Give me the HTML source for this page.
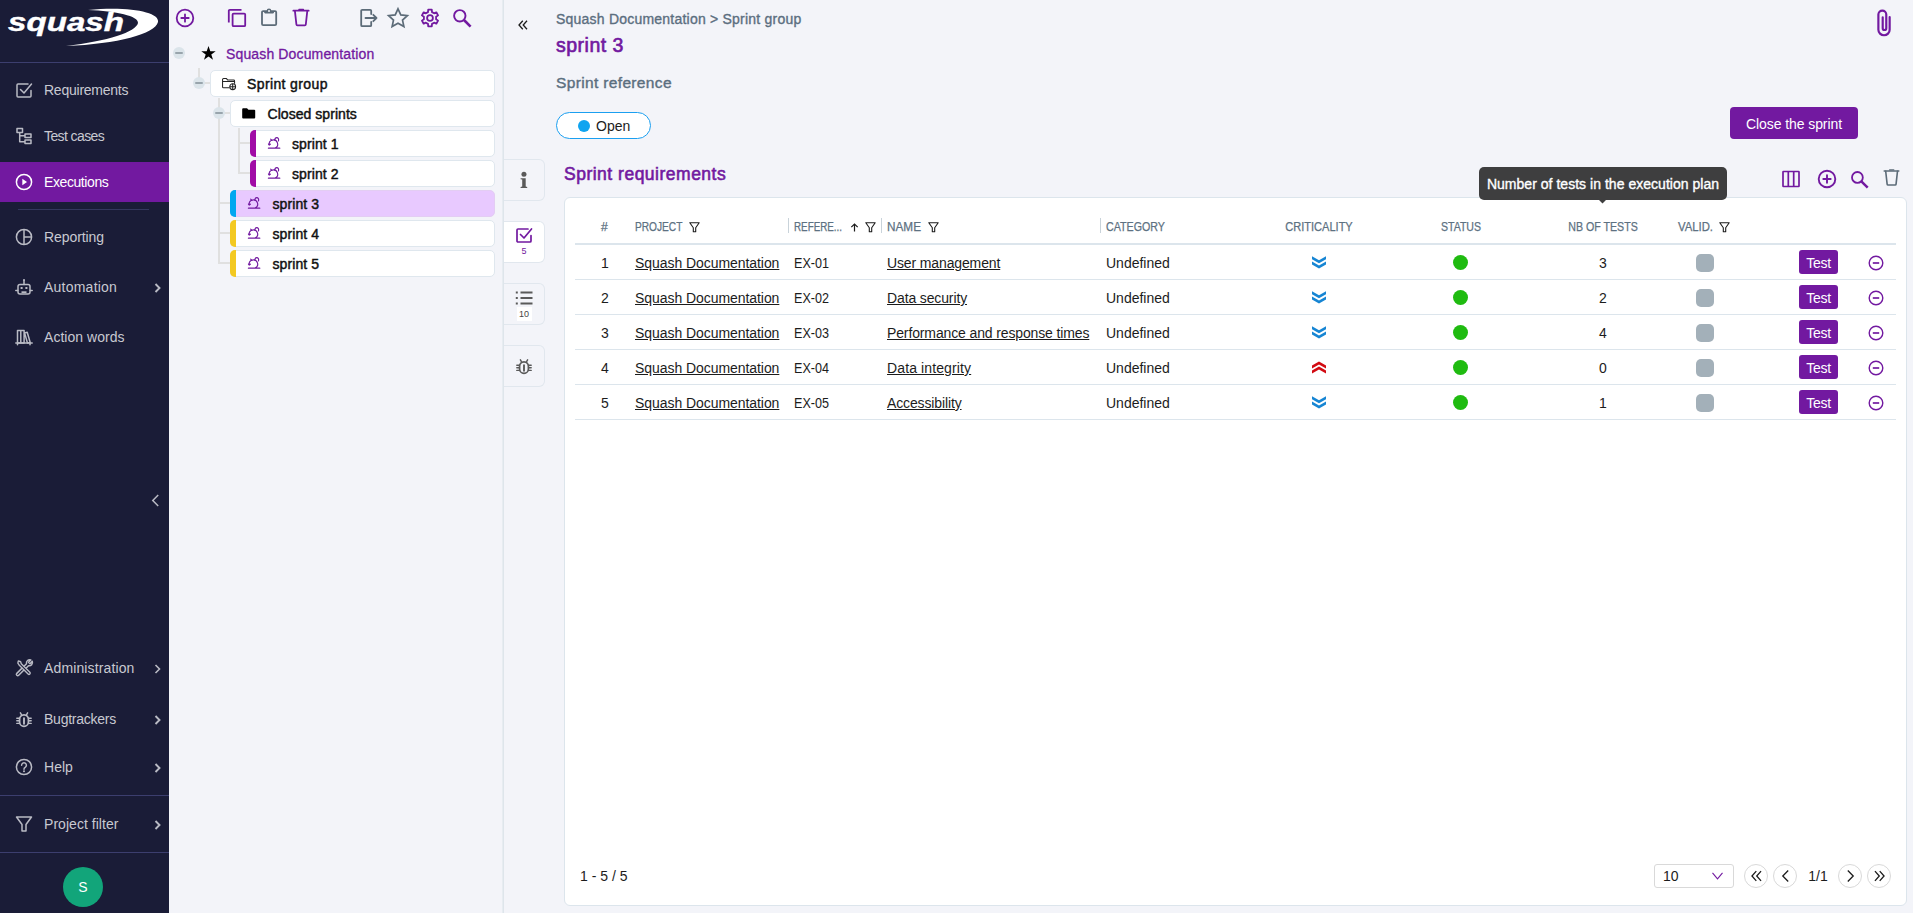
<!DOCTYPE html>
<html lang="en">
<head>
<meta charset="utf-8">
<title>Squash - sprint 3</title>
<style>
*{box-sizing:border-box;margin:0;padding:0}
html,body{width:1913px;height:913px;overflow:hidden}
body{font-family:"Liberation Sans",Arial,sans-serif;font-size:14px;color:#1c1c1c;background:#f3f4f9;position:relative}
.abs{position:absolute}
svg{display:block;overflow:visible}
/* NAV */
#nav{position:absolute;left:0;top:0;width:169px;height:913px;background:#1a1c37}
#nav .hr{position:absolute;left:0;width:169px;height:1px;background:#3c3e6e}
#nav .item{position:absolute;left:0;width:169px;height:40px;color:#c8c9d1}
#nav .item.active{background:#7219a0;color:#fff}
#nav .item .ic{position:absolute;left:15px;top:11px;width:18px;height:18px}
#nav .item .lb{position:absolute;left:44px;top:0;line-height:40px;font-size:14px;white-space:nowrap;letter-spacing:-0.15px}
#nav .item .ch{position:absolute;left:154px;top:15.500px;width:8px;height:10px}
/* TREE */
#tree{position:absolute;left:169px;top:0;width:334px;height:913px;background:#f3f4f9;border-right:1px solid #e7ecf1}
.tb{position:absolute;top:8px;width:20px;height:20px}
.node{position:absolute;height:27px;background:#fff;border:1px solid #dfe7ee;border-radius:5px;right:7px}
.node .t,.proj .t{position:absolute;top:0;line-height:26.500px;font-size:14px;white-space:nowrap;color:#111;-webkit-text-stroke:0.45px #111;letter-spacing:0.3px}
.node .bar{position:absolute;left:-1px;top:-1px;bottom:-1px;width:6px;border-radius:5px 0 0 5px}
.tg{position:absolute;width:12px;height:12px;border-radius:50%;background:#dbe4ea}
.tg:after{content:"";position:absolute;left:2px;top:5px;width:8px;height:2px;background:#98a4ac;border-radius:1px}
.ln{position:absolute;background:#e0e0e0}
/* MAIN */
#main{position:absolute;left:503px;top:0;width:1410px;height:913px;background:#f3f4f9;border-left:1px solid #dee5eb}
.sb{-webkit-text-stroke:0.35px currentColor}
.tab{position:absolute;left:0;width:41px;height:42px;border:1px solid #e1e7ee;border-left:none;border-radius:0 6px 6px 0;background:#f3f4f9}
.tab.sel{background:#fff}
#card{position:absolute;left:60px;top:197px;width:1343px;height:709px;background:#fff;border:1px solid #dce5ec;border-radius:6px}
.th{position:absolute;top:20.500px;font-size:12px;line-height:16px;color:#5d7182;white-space:nowrap;-webkit-text-stroke:0.25px #5d7182}
.vs{position:absolute;top:20px;width:1px;height:15px;background:#c9d3da}
.row{position:absolute;left:10px;width:1321px;height:35px;border-bottom:1px solid #dce5ec}
.row span,.row a{position:absolute;top:0;line-height:36px;font-size:14px;white-space:nowrap;color:#1c1c1c}
.row .ref{transform:scaleX(0.9);transform-origin:left}
.row a{text-decoration:underline;text-underline-offset:1px;letter-spacing:-0.13px}
.dot{position:absolute;left:878px;top:9.5px;width:15px;height:15px;border-radius:50%;background:#1fbb10}
.sq{position:absolute;left:1121px;top:9px;width:18px;height:18px;border-radius:5px;background:#a3b0b9}
.row .btnt{position:absolute;left:1224px;top:5px;width:39px;height:24px;border-radius:3px;background:#7219a0;color:#fff !important;text-align:center;line-height:26px !important;font-size:14px;letter-spacing:-0.3px}
.crit{position:absolute;left:737px;top:10.500px;width:14px;height:13px}
.rm{position:absolute;left:1293px;top:10px;width:16px;height:16px}
.pg{position:absolute;top:666px;width:24px;height:24px;border:1px solid #d9d9d9;border-radius:50%;background:#fff}
</style>
</head>
<body>
<div id="nav">
 <svg class="abs" style="left:0;top:0" width="169" height="62" viewBox="0 0 169 62">
  <path d="M88 10 C128 6 160 12 158 22 C155 34 118 44 66 46 C108 41 136 32 138 23 C139 16 116 11 88 10 Z" fill="#fff"/>
  <text x="8" y="31" font-family="Liberation Sans, Arial, sans-serif" font-weight="700" font-style="italic" font-size="25" fill="#fff" stroke="#fff" stroke-width="0.400" textLength="116" lengthAdjust="spacingAndGlyphs">squash</text>
 </svg>
 <div class="hr" style="top:62px;height:1px;background:#3c3e6e"></div>

 <div class="item" style="top:70px">
  <svg class="ic" viewBox="0 0 18 18" fill="none" stroke="#b9bac4" stroke-width="1.5" stroke-linecap="round" stroke-linejoin="round"><path d="M16 9.5V15a1 1 0 0 1-1 1H3a1 1 0 0 1-1-1V4a1 1 0 0 1 1-1h10"/><path d="M5.5 8.5l3.5 3.5 7.5-9"/></svg>
  <span class="lb" style="letter-spacing:-0.24px">Requirements</span></div>
 <div class="item" style="top:116px">
  <svg class="ic" viewBox="0 0 18 18" fill="none" stroke="#b9bac4" stroke-width="1.5" stroke-linejoin="round"><rect x="2" y="1.500" width="5.500" height="4"/><rect x="10" y="7" width="6" height="3.400"/><rect x="10" y="13" width="6" height="3.400"/><path d="M4.700 5.500v9.200H10M4.700 8.700H10"/></svg>
  <span class="lb" style="letter-spacing:-0.6px">Test cases</span></div>
 <div class="item active" style="top:162px">
  <svg class="ic" viewBox="0 0 18 18" fill="none" stroke="#fff" stroke-width="1.5"><circle cx="9" cy="9" r="7.6"/><path d="M7.3 5.8v6.4L12 9z" fill="#fff" stroke="none"/></svg>
  <span class="lb" style="letter-spacing:-0.41px">Executions</span></div>
 <div class="abs" style="left:18px;top:209px;width:131px;height:1px;background:#34375f"></div>
 <div class="item" style="top:217px">
  <svg class="ic" viewBox="0 0 18 18" fill="none" stroke="#b9bac4" stroke-width="1.5"><circle cx="9" cy="9" r="7.6"/><path d="M9 1.4v15.2M9 9h7.6"/></svg>
  <span class="lb" style="letter-spacing:-0.08px">Reporting</span></div>
 <div class="item" style="top:267px">
  <svg class="ic" viewBox="0 0 18 18" fill="none" stroke="#b9bac4" stroke-width="1.5" stroke-linejoin="round"><rect x="3" y="6.5" width="12" height="9.5" rx="2"/><path d="M9 6.5V2.5M0.8 12.5h2M15.2 12.5h2" stroke-linecap="round"/><circle cx="9" cy="2" r="1" fill="#b9bac4" stroke="none"/><rect x="5.6" y="9" width="2" height="2" fill="#b9bac4" stroke="none"/><rect x="10.4" y="9" width="2" height="2" fill="#b9bac4" stroke="none"/><path d="M6.5 14.2h5" stroke-width="1.8"/></svg>
  <span class="lb" style="letter-spacing:0.23px">Automation</span>
  <svg class="ch" viewBox="0 0 8 10" fill="none" stroke="#b9bac4" stroke-width="1.900"><path d="M1.500 1l4 4-4 4"/></svg></div>
 <div class="item" style="top:317px">
  <svg class="ic" viewBox="0 0 18 18" fill="none" stroke="#b9bac4" stroke-width="1.5" stroke-linejoin="round"><path d="M2.5 2.5h3.3V15H2.5zM5.8 2.5h3.3V15H5.8zM9.6 5l2.6-.7 3 10.2-2.7.6z"/><path d="M0.8 15h16.4M2.5 15v1.8M15 15v1.8" stroke-linecap="round"/></svg>
  <span class="lb" style="letter-spacing:0.04px">Action words</span></div>

 <svg class="abs" style="left:150px;top:493.500px" width="11" height="13" viewBox="0 0 10 12" fill="none" stroke="#b9bac4" stroke-width="1.400"><path d="M7.500 1L2.500 6l5 5"/></svg>

 <div class="item" style="top:648px">
  <svg class="ic" viewBox="0 0 18 18" fill="none" stroke="#b9bac4" stroke-width="1.5" stroke-linecap="round" stroke-linejoin="round"><path d="M2 2l2.5 1 .7 2.2 9.3 9.3a1.3 1.3 0 0 1-1.9 1.9L3.3 7.1 1.5 4.5z" transform="translate(1.5 0) scale(0.92)"/><path d="M10 7.5l2-2a3.3 3.3 0 0 1 4.300-3.8l-2.3 2.300 1.500 1.500 2.300-2.300a3.300 3.300 0 0 1-3.800 4.300l-2 2M7.300 10.200l-5 5a1.300 1.300 0 0 0 1.900 1.900l5-5" transform="translate(-0.5 -0.8)"/></svg>
  <span class="lb" style="letter-spacing:0.13px">Administration</span>
  <svg class="ch" viewBox="0 0 8 10" fill="none" stroke="#b9bac4" stroke-width="1.6"><path d="M1.500 1l4 4-4 4"/></svg></div>
 <div class="item" style="top:699px">
  <svg class="ic" viewBox="0 0 18 18" fill="none" stroke="#b9bac4" stroke-width="1.500" stroke-linecap="round"><path d="M4.600 9.300a4.400 4.400 0 0 1 8.800 0v2.600a4.400 4.400 0 0 1-8.800 0z" stroke-width="1.700"/><path d="M9 8.300v5.400" stroke-width="1.900"/><path d="M6.600 4.800L5.400 2.900M11.400 4.800l1.200-1.900" stroke-width="1.500"/><path d="M4.400 8.200H1.800M4.400 10.800H1.800M4.400 13.400H1.800M13.600 8.200h2.600M13.600 10.800h2.600M13.600 13.400h2.600" stroke-width="1.400"/></svg>
  <span class="lb" style="letter-spacing:-0.24px">Bugtrackers</span>
  <svg class="ch" viewBox="0 0 8 10" fill="none" stroke="#b9bac4" stroke-width="1.900"><path d="M1.500 1l4 4-4 4"/></svg></div>
 <div class="item" style="top:747px">
  <svg class="ic" viewBox="0 0 18 18" fill="none" stroke="#b9bac4" stroke-width="1.500"><circle cx="9" cy="9" r="7.600"/><path d="M6.600 7.200a2.400 2.400 0 1 1 3.600 2.100c-.8.500-1.200.9-1.200 1.900" stroke-linecap="round"/><circle cx="9" cy="13.300" r="1" fill="#b9bac4" stroke="none"/></svg>
  <span class="lb" style="letter-spacing:0.03px">Help</span>
  <svg class="ch" viewBox="0 0 8 10" fill="none" stroke="#b9bac4" stroke-width="1.900"><path d="M1.500 1l4 4-4 4"/></svg></div>
 <div class="hr" style="top:795px;height:1px"></div>
 <div class="item" style="top:804px">
  <svg class="ic" viewBox="0 0 18 18" fill="none" stroke="#b9bac4" stroke-width="1.500" stroke-linejoin="round"><path d="M1.500 2h15L11 9.500V16H7V9.500z"/></svg>
  <span class="lb" style="letter-spacing:0.04px">Project filter</span>
  <svg class="ch" viewBox="0 0 8 10" fill="none" stroke="#b9bac4" stroke-width="1.900"><path d="M1.500 1l4 4-4 4"/></svg></div>
 <div class="hr" style="top:852px;height:1px"></div>
 <div class="abs" style="left:63px;top:867px;width:40px;height:40px;border-radius:50%;background:#12a57a;color:#fff;text-align:center;line-height:40px;font-size:14px">S</div>
</div>
<div id="tree">
 <!-- toolbar -->
 <svg class="tb" style="left:6px" viewBox="0 0 20 20" fill="none" stroke="#7219a0" stroke-width="1.8" stroke-linecap="round"><circle cx="10" cy="10" r="8.3"/><path d="M6.300 10h7.400M10 6.300v7.400"/></svg>
 <svg class="tb" style="left:58px" viewBox="0 0 20 20" fill="none" stroke="#7219a0" stroke-width="1.8" stroke-linejoin="round"><rect x="5.600" y="5.600" width="12.600" height="12.600" rx="1"/><path d="M1.800 14.500V2.800a1 1 0 0 1 1-1h11.700"/></svg>
 <svg class="tb" style="left:90px" viewBox="0 0 20 20" fill="none" stroke="#5c6b78" stroke-width="1.800" stroke-linejoin="round"><rect x="3" y="3.100" width="14.200" height="14" rx="1.200"/><path d="M5.800 3.600h8.600v1.400H5.800z" fill="#5c6b78" stroke-width="1"/><circle cx="10" cy="2.800" r="2.300" fill="#5c6b78" stroke="none"/><circle cx="10" cy="2.900" r="1" fill="#f3f4f9" stroke="none"/></svg>
 <svg class="tb" style="left:122px" viewBox="0 0 20 20" fill="none" stroke="#7219a0" stroke-width="1.800" stroke-linejoin="round" stroke-linecap="round"><path d="M2.300 2.700h15.400" stroke-width="1.700"/><path d="M8 1.500h4.400" stroke-width="1.500"/><path d="M3.900 2.900l1.500 13.600a1 1 0 0 0 1 .900h7.400a1 1 0 0 0 1-.900L16.300 2.900"/></svg>
 <svg class="tb" style="left:190px" viewBox="0 0 20 20" fill="none" stroke="#5c6b78" stroke-width="1.8" stroke-linejoin="round" stroke-linecap="round"><path d="M12.200 6V2.800a1 1 0 0 0-1-1H3.200a1 1 0 0 0-1 1v14.400a1 1 0 0 0 1 1h8a1 1 0 0 0 1-1V14M6.500 10h11M14.300 6.800l3.200 3.200-3.200 3.200"/></svg>
 <svg class="tb" style="left:218px;top:7px;width:22px;height:21px" viewBox="0 0 22 21" fill="none" stroke="#5c6b78" stroke-width="1.7" stroke-linejoin="miter"><path d="M11 1.800l2.800 6.100 6.600.7-4.900 4.500 1.400 6.500L11 16.300l-5.900 3.300 1.400-6.500L1.600 8.600l6.600-.7z"/></svg>
 <svg class="tb" style="left:251px" viewBox="0 0 20 20" fill="none" stroke="#7219a0"><circle cx="10" cy="10" r="2.900" stroke-width="1.800"/><path stroke-width="1.800" stroke-linejoin="round" d="M7.98 4.14 L8.23 1.69 L11.77 1.69 L12.02 4.14 L14.07 5.32 L16.32 4.31 L18.08 7.37 L16.09 8.82 L16.09 11.18 L18.08 12.63 L16.32 15.69 L14.07 14.68 L12.02 15.86 L11.77 18.31 L8.23 18.31 L7.98 15.86 L5.93 14.68 L3.68 15.69 L1.92 12.63 L3.91 11.18 L3.91 8.82 L1.92 7.37 L3.68 4.31 L5.93 5.32Z"/></svg>
 <svg class="tb" style="left:283px" viewBox="0 0 20 20" fill="none" stroke="#7219a0" stroke-linecap="butt"><circle cx="7.800" cy="7.800" r="5.700" stroke-width="1.900"/><path d="M12 12l6.600 6.600" stroke-width="2.600"/></svg>

 <!-- lines -->
 <div class="ln" style="left:29px;top:68px;width:2px;height:10px"></div>
 <div class="ln" style="left:36px;top:82px;width:6px;height:2px"></div>
 <div class="ln" style="left:49px;top:98px;width:2px;height:166px"></div>
 <div class="ln" style="left:56px;top:112px;width:6px;height:2px"></div>
 <div class="ln" style="left:49px;top:202px;width:13px;height:2px"></div>
 <div class="ln" style="left:49px;top:232px;width:13px;height:2px"></div>
 <div class="ln" style="left:49px;top:262px;width:13px;height:2px"></div>
 <div class="ln" style="left:69px;top:128px;width:2px;height:46px"></div>
 <div class="ln" style="left:69px;top:142px;width:12px;height:2px"></div>
 <div class="ln" style="left:69px;top:172px;width:12px;height:2px"></div>

 <!-- project -->
 <div class="tg" style="left:4px;top:47px"></div>
 <div class="proj">
  <svg class="abs" style="left:32px;top:46px" width="15" height="14" viewBox="0 0 15 14"><path d="M7.500 0l1.800 5.200h5.400l-4.400 3.300 1.700 5.300-4.500-3.300-4.500 3.300 1.700-5.300L.300 5.200h5.400z" fill="#000"/></svg>
  <span class="t" style="left:57px;top:40px;line-height:28px;color:#7219a0;-webkit-text-stroke:0.3px #7219a0;letter-spacing:0.14px">Squash Documentation</span>
 </div>

 <div class="tg" style="left:24px;top:77px"></div>
 <div class="node" style="left:41px;top:70px">
  <svg class="abs" style="left:10.500px;top:7px" width="15" height="12.200" viewBox="0 0 16 13" fill="none" stroke="#222" stroke-width="1.100" stroke-linejoin="round"><path d="M8 10.500H1.600a1 1 0 0 1-1-1V1.600a1 1 0 0 1 1-1h3.200l1.300 1.600h6.300a1 1 0 0 1 1 1v3M.6 3.800h12.800"/><circle cx="11.400" cy="9.300" r="3.100"/><path d="M8.300 9.300h6.200M11.400 6.200v6.200"/></svg>
  <span class="t" style="left:36px;letter-spacing:0.380px">Sprint group</span>
 </div>

 <div class="tg" style="left:44px;top:107px"></div>
 <div class="node" style="left:61px;top:100px">
  <svg class="abs" style="left:11px;top:6.500px" width="13.500" height="11" viewBox="0 0 14 12" preserveAspectRatio="none"><path d="M1.200.300h4l1.500 1.500h6a1 1 0 0 1 1 1v7.600a1 1 0 0 1-1 1H1.200a1 1 0 0 1-1-1V1.300a1 1 0 0 1 1-1z" fill="#000"/></svg>
  <span class="t" style="left:36.500px;letter-spacing:0.050px">Closed sprints</span>
 </div>

 <div class="node" style="left:81px;top:130px"><div class="bar" style="background:#a10da6"></div>
  <svg class="abs sp" style="left:16.500px;top:6px" width="12.200" height="12.200" viewBox="0 0 13 13" fill="none" stroke="#7219a0" stroke-width="1.200" stroke-linecap="round" stroke-linejoin="round"><path d="M.400 11.900H12.600M7.500 11.770A4.500 4.500 0 1 0 1.350 8.300M.500 7.500L1.350 8.600 2.500 7.700M2.800 2.200L4.400 3.600M7.200 3.600C7.300 1.600 8.500 .700 9.400 .700 10.800 .700 11.700 2.200 11.200 4.100"/></svg>
  <span class="t" style="left:41px;letter-spacing:0.100px">sprint 1</span></div>
 <div class="node" style="left:81px;top:160px"><div class="bar" style="background:#a10da6"></div>
  <svg class="abs sp" style="left:16.500px;top:6px" width="12.200" height="12.200" viewBox="0 0 13 13" fill="none" stroke="#7219a0" stroke-width="1.200" stroke-linecap="round" stroke-linejoin="round"><path d="M.400 11.900H12.600M7.500 11.770A4.500 4.500 0 1 0 1.350 8.300M.500 7.500L1.350 8.600 2.500 7.700M2.800 2.200L4.400 3.600M7.200 3.600C7.300 1.600 8.500 .700 9.400 .700 10.800 .700 11.700 2.200 11.200 4.100"/></svg>
  <span class="t" style="left:41px;letter-spacing:0.100px">sprint 2</span></div>
 <div class="node" style="left:61px;top:190px;background:#e8c9ff;border-color:#e3cdf3"><div class="bar" style="background:#02a7f0"></div>
  <svg class="abs sp" style="left:16.500px;top:6px" width="12.200" height="12.200" viewBox="0 0 13 13" fill="none" stroke="#7219a0" stroke-width="1.200" stroke-linecap="round" stroke-linejoin="round"><path d="M.400 11.900H12.600M7.500 11.770A4.500 4.500 0 1 0 1.350 8.300M.500 7.500L1.350 8.600 2.500 7.700M2.800 2.200L4.400 3.600M7.200 3.600C7.300 1.600 8.500 .700 9.400 .700 10.800 .700 11.700 2.200 11.200 4.100"/></svg>
  <span class="t" style="left:41.500px;letter-spacing:0.100px">sprint 3</span></div>
 <div class="node" style="left:61px;top:220px"><div class="bar" style="background:#f3c922"></div>
  <svg class="abs sp" style="left:16.500px;top:6px" width="12.200" height="12.200" viewBox="0 0 13 13" fill="none" stroke="#7219a0" stroke-width="1.200" stroke-linecap="round" stroke-linejoin="round"><path d="M.400 11.900H12.600M7.500 11.770A4.500 4.500 0 1 0 1.350 8.300M.500 7.500L1.350 8.600 2.500 7.700M2.800 2.200L4.400 3.600M7.200 3.600C7.300 1.600 8.500 .700 9.400 .700 10.800 .700 11.700 2.200 11.200 4.100"/></svg>
  <span class="t" style="left:41.500px;letter-spacing:0.100px">sprint 4</span></div>
 <div class="node" style="left:61px;top:250px"><div class="bar" style="background:#f3c922"></div>
  <svg class="abs sp" style="left:16.500px;top:6px" width="12.200" height="12.200" viewBox="0 0 13 13" fill="none" stroke="#7219a0" stroke-width="1.200" stroke-linecap="round" stroke-linejoin="round"><path d="M.400 11.900H12.600M7.500 11.770A4.500 4.500 0 1 0 1.350 8.300M.500 7.500L1.350 8.600 2.500 7.700M2.800 2.200L4.400 3.600M7.200 3.600C7.300 1.600 8.500 .700 9.400 .700 10.800 .700 11.700 2.200 11.200 4.100"/></svg>
  <span class="t" style="left:41.500px;letter-spacing:0.100px">sprint 5</span></div>
</div>
<div id="main">
 <!-- collapse -->
 <svg class="abs" style="left:14px;top:20px" width="10" height="10" viewBox="0 0 10 10" fill="none" stroke="#1c1c1c" stroke-width="1.300"><path d="M4.800 .8L1 5l3.800 4.200M9 .8L5.200 5 9 9.200"/></svg>
 <div class="abs sb" style="left:52px;top:9px;line-height:20px;font-size:14px;color:#5b6e7f;white-space:nowrap;letter-spacing:0.22px">Squash Documentation &gt; Sprint group</div>
 <div class="abs sb" style="left:52px;top:31px;line-height:28px;font-size:19.5px;color:#7219a0;white-space:nowrap;-webkit-text-stroke-width:0.65px;letter-spacing:0.5px">sprint 3</div>
 <div class="abs sb" style="left:52px;top:71px;line-height:24px;font-size:15.500px;color:#5b6e7f;white-space:nowrap;-webkit-text-stroke-width:0.4px;letter-spacing:0.35px">Sprint reference</div>
 <!-- paperclip -->
 <svg class="abs" style="left:1372px;top:8px" width="16" height="30" viewBox="0 0 16 30" fill="none" stroke="#7219a0" stroke-width="2.300" stroke-linecap="round"><path d="M14 9v13.500a6 6 0 0 1-12 0V6.500a4.200 4.200 0 0 1 8.400 0V21a1.900 1.900 0 0 1-3.800 0V9.500" transform="translate(0.500 0.500) scale(0.940)"/></svg>
 <!-- status pill -->
 <div class="abs" style="left:52px;top:112px;width:95px;height:27px;border:1px solid #1b9ff0;border-radius:14px;background:#fff">
  <div class="abs" style="left:21px;top:7px;width:12px;height:12px;border-radius:50%;background:#0fa4f0"></div>
  <span class="abs" style="left:39px;top:0;line-height:26px;font-size:14px;color:#1c1c1c">Open</span>
 </div>
 <div class="abs" style="left:1226px;top:107px;width:128px;height:32px;border-radius:4px;background:#7219a0;color:#fff;text-align:center;line-height:34px;font-size:14px;letter-spacing:-0.080px">Close the sprint</div>

 <!-- side tabs -->
 <div class="tab" style="top:159px"><svg class="abs" style="left:12px;top:9px" width="16" height="20" viewBox="0 0 16 20" fill="#5a5a5a"><circle cx="7.950" cy="5.250" r="2.500"/><path d="M4.600 9.200h5.100v8.300l1.500.400v1H4.600v-1l1.600-.400v-6.900l-1.600-.300z"/></svg></div>
 <div class="tab sel" style="top:221px"><svg class="abs" style="left:11px;top:4px" width="18" height="18" viewBox="0 0 18 18" fill="none" stroke="#7219a0" stroke-width="1.700" stroke-linecap="round" stroke-linejoin="round"><path d="M16 9.500V15a1 1 0 0 1-1 1H3a1 1 0 0 1-1-1V4a1 1 0 0 1 1-1h10"/><path d="M5.500 8.500l3.500 3.500 7.500-9"/></svg><span class="abs" style="left:0;width:40px;text-align:center;top:23px;font-size:9px;line-height:12px;color:#7219a0">5</span></div>
 <div class="tab" style="top:283px"><svg class="abs" style="left:11px;top:7px" width="18" height="14" viewBox="0 0 18 14" fill="none" stroke="#5a5a5a" stroke-width="1.900"><path d="M5.500 1.500h12M5.500 7h12M5.500 12.500h12M.800 1.500h2M.800 7h2M.800 12.500h2"/></svg><span class="abs" style="left:12.500px;width:15px;text-align:center;top:23px;font-size:9px;line-height:14px;color:#444;background:#fff">10</span></div>
 <div class="tab" style="top:345px"><svg class="abs" style="left:11px;top:11px" width="18" height="18" viewBox="0 0 18 18" fill="none" stroke="#5a5a5a" stroke-width="1.500" stroke-linecap="round"><path d="M4.600 9.300a4.400 4.400 0 0 1 8.800 0v2.600a4.400 4.400 0 0 1-8.800 0z" stroke-width="1.700"/><path d="M9 8.300v5.400" stroke-width="1.900"/><path d="M6.600 4.800L5.400 2.900M11.400 4.800l1.200-1.900" stroke-width="1.500"/><path d="M4.400 8.200H1.800M4.400 10.800H1.800M4.400 13.400H1.800M13.600 8.200h2.600M13.600 10.800h2.600M13.600 13.400h2.600" stroke-width="1.400"/></svg></div>

 <div class="abs sb" style="left:60px;top:160px;line-height:28px;font-size:17.500px;color:#7219a0;white-space:nowrap;-webkit-text-stroke-width:0.6px;letter-spacing:0.5px">Sprint requirements</div>

 <!-- tooltip -->
 <div class="abs" style="left:975px;top:167px;width:248px;height:33px;border-radius:5px;background:#3e3e3f;color:#fff;text-align:center;line-height:35px;font-size:14px;white-space:nowrap;-webkit-text-stroke:0.35px #fff;letter-spacing:0.03px;z-index:5">Number of tests in the execution plan</div>
 <div class="abs" style="left:1094.500px;top:195px;width:7px;height:7px;background:#3e3e3f;transform:rotate(45deg);z-index:4"></div>

 <!-- panel toolbar -->
 <svg class="abs" style="left:1278px;top:170px" width="18" height="18" viewBox="0 0 18 18" fill="none" stroke="#7219a0" stroke-width="1.700"><rect x="1" y="1.500" width="16" height="15" rx="0.500"/><path d="M6.300 1.500v15M11.700 1.500v15"/></svg>
 <svg class="abs" style="left:1313px;top:169px" width="20" height="20" viewBox="0 0 20 20" fill="none" stroke="#7219a0" stroke-width="1.900" stroke-linecap="round"><circle cx="10" cy="10" r="8.300"/><path d="M6.300 10h7.400M10 6.300v7.400"/></svg>
 <svg class="abs" style="left:1346px;top:170px" width="19" height="19" viewBox="0 0 20 20" fill="none" stroke="#7219a0"><circle cx="7.800" cy="7.800" r="5.700" stroke-width="1.900"/><path d="M12 12l6.600 6.600" stroke-width="2.600"/></svg>
 <svg class="abs" style="left:1378px;top:167.500px" width="19" height="20" viewBox="0 0 20 20" fill="none" stroke="#5c6b78" stroke-width="1.700" stroke-linejoin="round" stroke-linecap="round"><path d="M2.300 2.700h15.400" stroke-width="1.600"/><path d="M8 1.500h4.400" stroke-width="1.400"/><path d="M3.900 2.900l1.500 13.600a1 1 0 0 0 1 .900h7.400a1 1 0 0 0 1-.900L16.300 2.900"/></svg>

 <div id="card">
<span class="th" style="left:36px">#</span>
<span class="th" style="left:70px;transform:scaleX(0.846);transform-origin:left">PROJECT</span><svg class="abs" style="left:124px;top:24px" width="11" height="11" viewBox="0 0 11 11" fill="none" stroke="#1c1c1c" stroke-width="1.100" stroke-linejoin="round"><path d="M.800 .800h9.400L6.700 5.800v4H4.300v-4z"/></svg>
<div class="vs" style="left:223px"></div>
<span class="th" style="left:229px;transform:scaleX(0.818);transform-origin:left">REFERE...</span>
<svg class="abs" style="left:285px;top:25px" width="9" height="9" viewBox="0 0 9 9" fill="none" stroke="#1c1c1c" stroke-width="1.200"><path d="M4.500 8.500V1M1.300 4.200L4.500 1l3.200 3.200"/></svg>
<svg class="abs" style="left:300px;top:24px" width="11" height="11" viewBox="0 0 11 11" fill="none" stroke="#1c1c1c" stroke-width="1.100" stroke-linejoin="round"><path d="M.800 .800h9.400L6.700 5.800v4H4.300v-4z"/></svg>
<div class="vs" style="left:316px"></div>
<span class="th" style="left:322px;transform:scaleX(0.98);transform-origin:left">NAME</span><svg class="abs" style="left:363px;top:24px" width="11" height="11" viewBox="0 0 11 11" fill="none" stroke="#1c1c1c" stroke-width="1.100" stroke-linejoin="round"><path d="M.800 .800h9.400L6.700 5.800v4H4.300v-4z"/></svg>
<div class="vs" style="left:535px"></div>
<span class="th" style="left:541px;transform:scaleX(0.89);transform-origin:left">CATEGORY</span>
<span class="th" style="left:694px;width:120px;text-align:center;transform:scaleX(0.92);transform-origin:center">CRITICALITY</span>
<span class="th" style="left:836px;width:120px;text-align:center;transform:scaleX(0.88);transform-origin:center">STATUS</span>
<span class="th" style="left:978px;width:120px;text-align:center;transform:scaleX(0.887);transform-origin:center">NB OF TESTS</span>
<span class="th" style="left:1113px;transform:scaleX(0.943);transform-origin:left">VALID.</span><svg class="abs" style="left:1154px;top:24px" width="11" height="11" viewBox="0 0 11 11" fill="none" stroke="#1c1c1c" stroke-width="1.100" stroke-linejoin="round"><path d="M.800 .800h9.400L6.700 5.800v4H4.300v-4z"/></svg>
<div class="abs" style="left:10px;top:45px;width:1321px;height:2px;background:#dce5ec"></div>
<div class="row" style="top:47px"><span style="left:10px;width:40px;text-align:center">1</span><a style="left:60px;letter-spacing:-0.060px">Squash Documentation</a><span class="ref" style="left:219px">EX-01</span><a style="left:312px">User management</a><span style="left:531px">Undefined</span><svg class="crit" viewBox="0 0 14 13"><path d="M0 .200l7 4 7-4v3l-7 4-7-4zM0 5.400l7 4 7-4v3l-7 4-7-4z" fill="#1685d3"/></svg><div class="dot"></div><span style="left:1008px;width:40px;text-align:center">3</span><div class="sq"></div><span class="btnt">Test</span><svg class="rm" viewBox="0 0 16 16" fill="none" stroke="#7219a0" stroke-width="1.400"><circle cx="8" cy="8" r="6.800"/><path d="M4.800 8h6.400" stroke-width="1.700"/></svg></div>
<div class="row" style="top:82px"><span style="left:10px;width:40px;text-align:center">2</span><a style="left:60px;letter-spacing:-0.060px">Squash Documentation</a><span class="ref" style="left:219px">EX-02</span><a style="left:312px">Data security</a><span style="left:531px">Undefined</span><svg class="crit" viewBox="0 0 14 13"><path d="M0 .200l7 4 7-4v3l-7 4-7-4zM0 5.400l7 4 7-4v3l-7 4-7-4z" fill="#1685d3"/></svg><div class="dot"></div><span style="left:1008px;width:40px;text-align:center">2</span><div class="sq"></div><span class="btnt">Test</span><svg class="rm" viewBox="0 0 16 16" fill="none" stroke="#7219a0" stroke-width="1.400"><circle cx="8" cy="8" r="6.800"/><path d="M4.800 8h6.400" stroke-width="1.700"/></svg></div>
<div class="row" style="top:117px"><span style="left:10px;width:40px;text-align:center">3</span><a style="left:60px;letter-spacing:-0.060px">Squash Documentation</a><span class="ref" style="left:219px">EX-03</span><a style="left:312px">Performance and response times</a><span style="left:531px">Undefined</span><svg class="crit" viewBox="0 0 14 13"><path d="M0 .200l7 4 7-4v3l-7 4-7-4zM0 5.400l7 4 7-4v3l-7 4-7-4z" fill="#1685d3"/></svg><div class="dot"></div><span style="left:1008px;width:40px;text-align:center">4</span><div class="sq"></div><span class="btnt">Test</span><svg class="rm" viewBox="0 0 16 16" fill="none" stroke="#7219a0" stroke-width="1.400"><circle cx="8" cy="8" r="6.800"/><path d="M4.800 8h6.400" stroke-width="1.700"/></svg></div>
<div class="row" style="top:152px"><span style="left:10px;width:40px;text-align:center">4</span><a style="left:60px;letter-spacing:-0.060px">Squash Documentation</a><span class="ref" style="left:219px">EX-04</span><a style="left:312px;letter-spacing:0.120px">Data integrity</a><span style="left:531px">Undefined</span><svg class="crit" viewBox="0 0 14 13"><path d="M0 7.400l7-4 7 4V4.400l-7-4-7 4zM0 12.600l7-4 7 4V9.600l-7-4-7 4z" fill="#d20a11"/></svg><div class="dot"></div><span style="left:1008px;width:40px;text-align:center">0</span><div class="sq"></div><span class="btnt">Test</span><svg class="rm" viewBox="0 0 16 16" fill="none" stroke="#7219a0" stroke-width="1.400"><circle cx="8" cy="8" r="6.800"/><path d="M4.800 8h6.400" stroke-width="1.700"/></svg></div>
<div class="row" style="top:187px"><span style="left:10px;width:40px;text-align:center">5</span><a style="left:60px;letter-spacing:-0.060px">Squash Documentation</a><span class="ref" style="left:219px">EX-05</span><a style="left:312px">Accessibility</a><span style="left:531px">Undefined</span><svg class="crit" viewBox="0 0 14 13"><path d="M0 .200l7 4 7-4v3l-7 4-7-4zM0 5.400l7 4 7-4v3l-7 4-7-4z" fill="#1685d3"/></svg><div class="dot"></div><span style="left:1008px;width:40px;text-align:center">1</span><div class="sq"></div><span class="btnt">Test</span><svg class="rm" viewBox="0 0 16 16" fill="none" stroke="#7219a0" stroke-width="1.400"><circle cx="8" cy="8" r="6.800"/><path d="M4.800 8h6.400" stroke-width="1.700"/></svg></div>
<span class="abs" style="left:15px;top:668px;line-height:20px;font-size:14px">1 - 5 / 5</span>
<div class="abs" style="left:1089px;top:666px;width:80px;height:24px;border:1px solid #d9d9d9;border-radius:3px;background:#fff"><span class="abs" style="left:8px;top:0;line-height:22px;font-size:14px">10</span><svg class="abs" style="left:57px;top:7px" width="11" height="8" viewBox="0 0 11 8" fill="none" stroke="#7219a0" stroke-width="1.100"><path d="M.500 .800l5 6 5-6"/></svg></div>
<div class="pg" style="left:1179px"><svg class="abs" style="left:4.500px;top:5px" width="13" height="12" viewBox="0 0 12 11" fill="none" stroke="#1c1c1c" stroke-width="1.200"><path d="M5.800 1L1.800 5.500l4 4.500M10.200 1L6.200 5.500l4 4.500"/></svg></div>
<div class="pg" style="left:1208px"><svg class="abs" style="left:4.500px;top:5px" width="13" height="12" viewBox="0 0 12 11" fill="none" stroke="#1c1c1c" stroke-width="1.200"><path d="M8.500 .500L3.500 5.500l5 5"/></svg></div>
<div class="pg" style="left:1273px"><svg class="abs" style="left:4.500px;top:5px" width="13" height="12" viewBox="0 0 12 11" fill="none" stroke="#1c1c1c" stroke-width="1.200"><path d="M3.500 .500l5 5-5 5"/></svg></div>
<div class="pg" style="left:1302px"><svg class="abs" style="left:4.500px;top:5px" width="13" height="12" viewBox="0 0 12 11" fill="none" stroke="#1c1c1c" stroke-width="1.200"><path d="M1.800 1l4 4.500-4 4.500M6.200 1l4 4.500-4 4.500"/></svg></div>
<span class="abs" style="left:1233px;width:40px;text-align:center;top:668px;line-height:20px;font-size:14px">1/1</span>
</div>
</div>
</body>
</html>
